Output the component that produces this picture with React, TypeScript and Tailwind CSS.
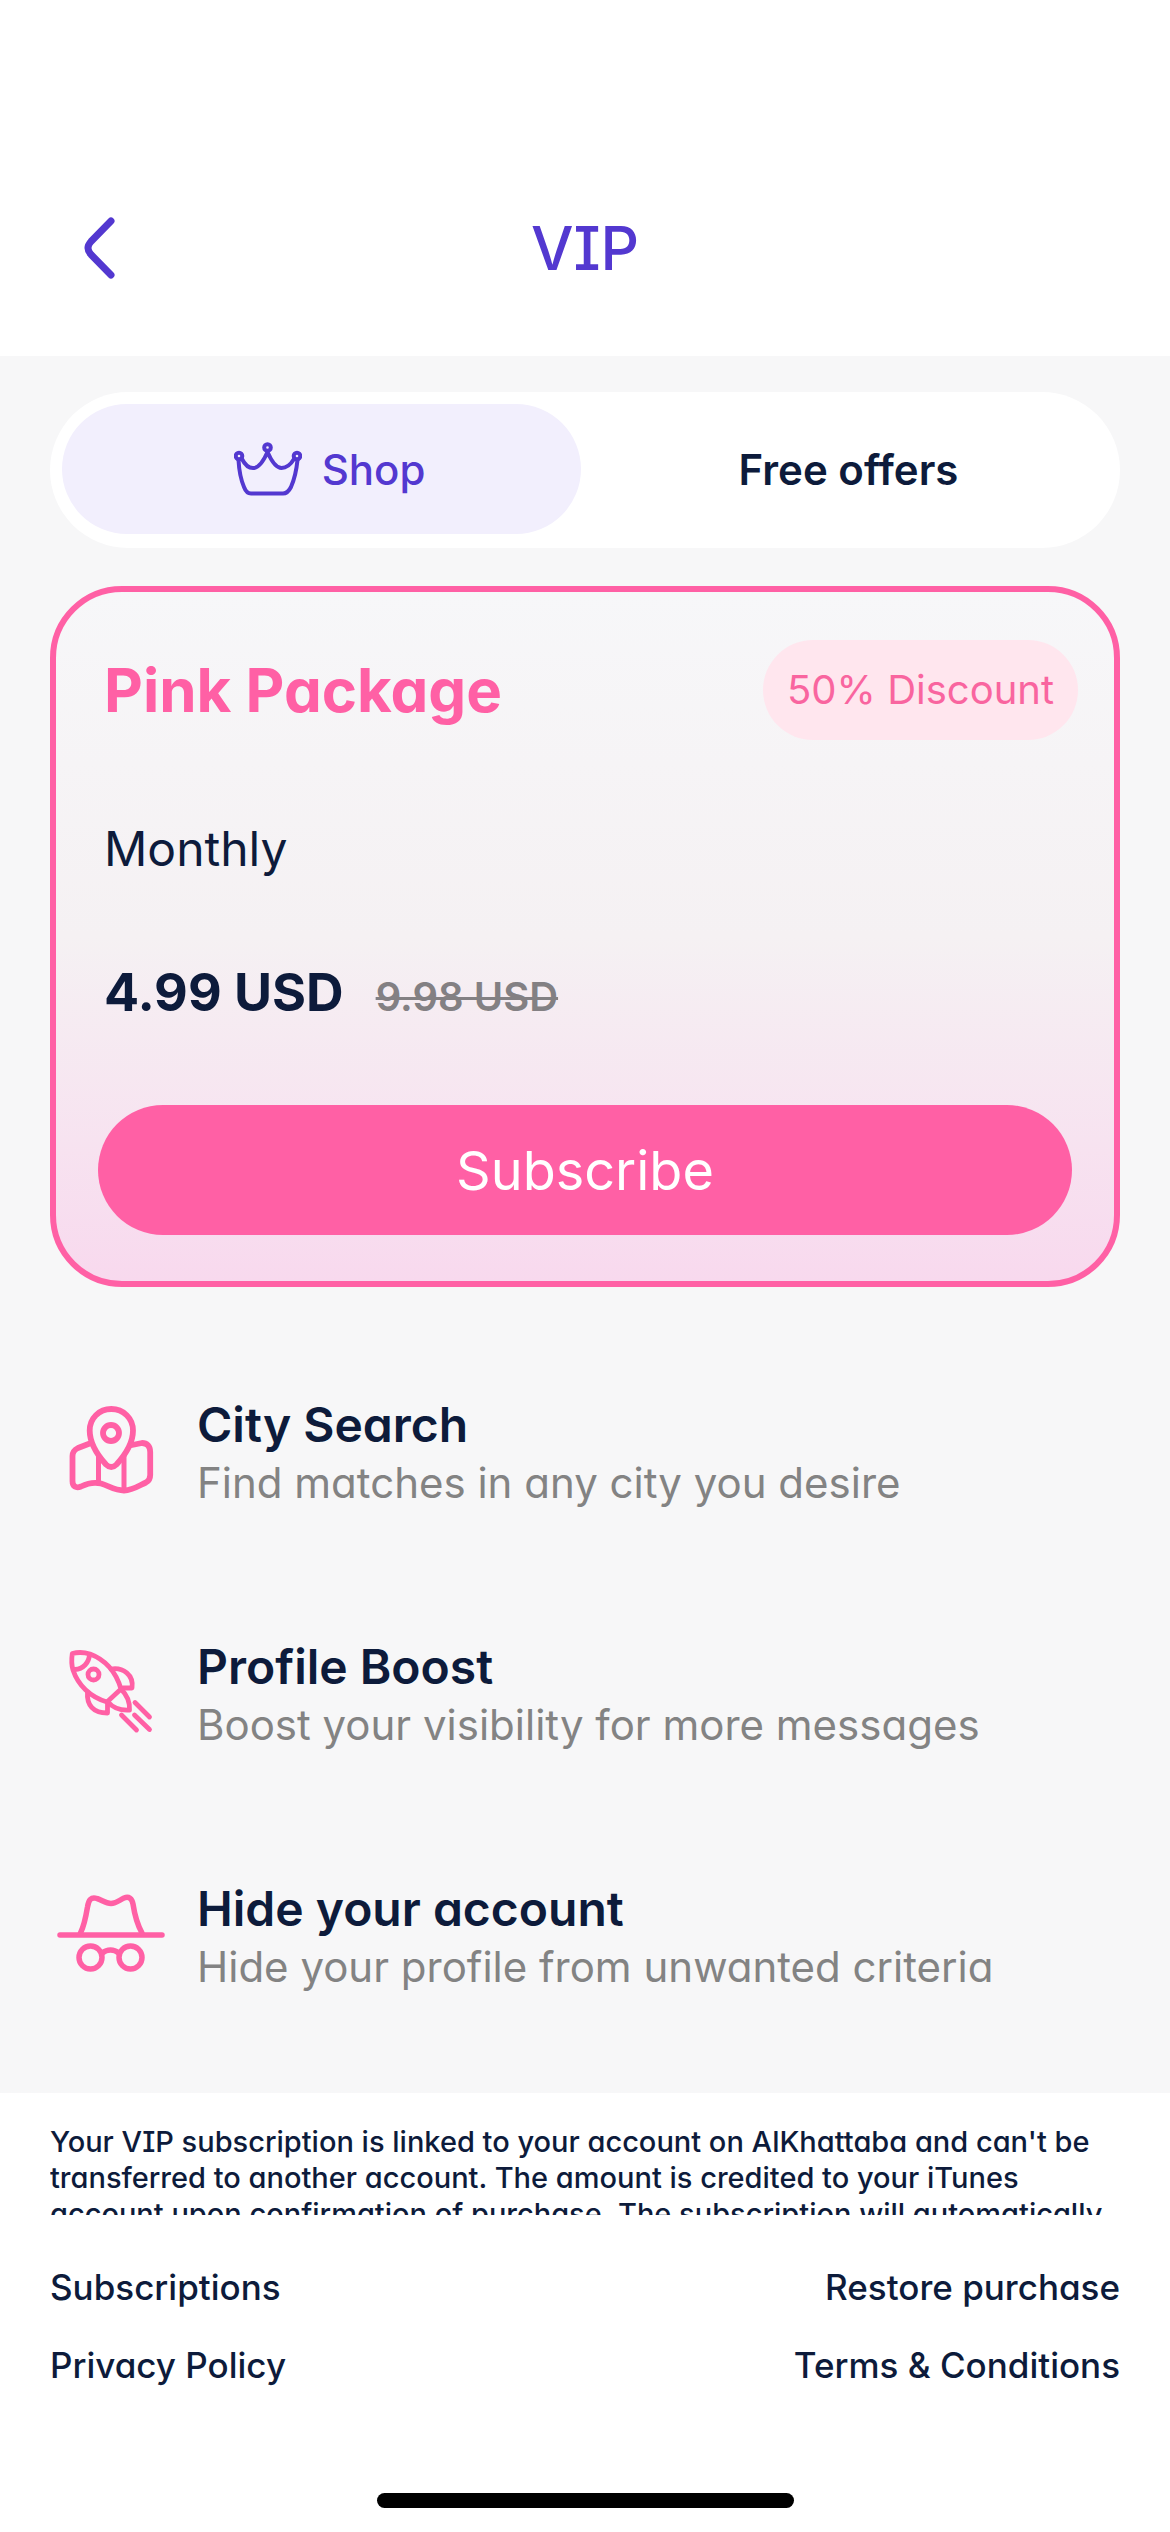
import { useState } from "react";
import type { ReactNode } from "react";

function CrownIcon() {
  return (
    <svg viewBox="0 0 68 54" className="w-[68px] h-[54px]" fill="none" stroke="currentColor" strokeWidth="4" strokeLinecap="round" strokeLinejoin="round">
      <circle cx="5" cy="14" r="3.3" />
      <circle cx="33.5" cy="5.5" r="3.3" />
      <circle cx="63" cy="14" r="3.3" />
      <path d="M4.5 18C5 27 7 38 10 45C11.5 49 13.5 51.5 17 51.5H49C53 51.5 55 49 57 45C60.5 37 62.5 28 63.5 18" />
      <path d="M8 17C11 23 15 26 19 26C25 26 30 18 33.5 10C37 18 42 26 47.5 26C52 26 57 22 60 17" />
    </svg>
  );
}

function MapIcon() {
  return (
    <svg viewBox="0 0 108 108" className="size-[108px]" fill="none" stroke="currentColor" strokeWidth="5.8" strokeLinecap="round" strokeLinejoin="round">
      <path d="M54.3 10C42 10 32.7 19.5 32.7 31.5C32.7 42 39.5 55 49 65.5C52.5 69 56 69 59.5 65.5C69 55 76 42 76 31.5C76 19.5 66.5 10 54.3 10Z" />
      <circle cx="54" cy="34" r="8" />
      <path d="M34 44L21 49C17 51 15.5 53 15.5 57V82C15.5 87.5 19 89.5 24 87.5C31 84 38 83 44 84.5C52 87 58 91.5 67 91.5C76 91.5 83 86 89 83.5C92 82 93.2 79.5 93.2 76V53C93.2 47 90 44 85 44L75 46" />
      <path d="M41.5 57V84M67 57V91" strokeWidth="5" />
    </svg>
  );
}

function RocketIcon() {
  return (
    <svg viewBox="0 0 108 108" className="size-[108px]" fill="none" stroke="currentColor" strokeWidth="4.8" strokeLinecap="round" strokeLinejoin="round">
      <path d="M15.3 12.5C21 11 28 11.5 33 13C49 19 59 31 64 48L50 61C33 56 21 44 16 29C14.5 24 14.5 18 15.3 12.5Z" />
      <path d="M32.5 13.5C32 22 26 28 18 28.5" />
      <circle cx="36.5" cy="33.5" r="5.5" />
      <path d="M54 28C66 26 77 34 75 47H66" />
      <path d="M30.5 51C29.5 64 36 72 50.5 72V62" />
      <path d="M51 61C56 67 64 69.5 72.5 69C73 60 70 54 64 48" />
      <path d="M78 61.5L92.5 76M77.5 74L92.5 88.5M64.5 74L79.5 89" />
    </svg>
  );
}

function IncognitoIcon() {
  return (
    <svg viewBox="0 0 108 108" className="size-[108px]" fill="none" stroke="currentColor" strokeWidth="5.5" strokeLinecap="round" strokeLinejoin="round">
      <path d="M3 52H105" />
      <path d="M23.5 50C27.5 42 29 33 30.5 24C31.5 17 34 13.5 40 15.5C45 17 48.5 20.5 54 20.5C59.5 20.5 62.5 17 67 15C72 13 75 15.5 76 21C77.5 31 80 41 85 50" />
      <circle cx="33.5" cy="74.5" r="11.5" />
      <circle cx="73.5" cy="74.5" r="11.5" />
      <path d="M45.5 70C50 66 57 66 61.5 70" />
    </svg>
  );
}

interface FeatureProps {
  icon: ReactNode;
  title: string;
  text: string;
}

function Feature({ icon, title, text }: FeatureProps) {
  return (
    <li className="flex items-center gap-8">
      <span className="text-[#ff60a5]">{icon}</span>
      <div>
        <h3 className="text-[48px] leading-[60px] font-semibold">{title}</h3>
        <p className="text-[42px] leading-[56px] text-[#838383]">{text}</p>
      </div>
    </li>
  );
}

const features = [
  { icon: <MapIcon />, title: "City Search", text: "Find matches in any city you desire" },
  { icon: <RocketIcon />, title: "Profile Boost", text: "Boost your visibility for more messages" },
  { icon: <IncognitoIcon />, title: "Hide your account", text: "Hide your profile from unwanted criteria" },
];

export default function App() {
  const [tab, setTab] = useState("shop");

  return (
    <div className="min-h-screen flex flex-col bg-white text-[#0d1b3b] font-['Inter',sans-serif] [font-optical-sizing:none] [font-feature-settings:'cv11','cv08']">
      <header className="grid grid-cols-[1fr_auto_1fr] items-center px-[82px] pt-[208px] pb-[68px] text-[#5338d0]">
        <button aria-label="Back" className="justify-self-start cursor-pointer">
          <svg viewBox="0 0 34 64" className="w-[34px] h-[64px]" fill="none" stroke="currentColor" strokeWidth="7" strokeLinecap="round">
            <path d="M29 5L9 25.5C5 30 5 34 9 38.5L29 59" />
          </svg>
        </button>
        <h1 className="text-[60px] leading-[80px] font-medium">VIP</h1>
      </header>

      <main className="bg-[#f7f7f8] px-[50px] pt-9 pb-[98px]">
        <div className="grid grid-cols-2 gap-2 rounded-full bg-white px-3 pt-3 pb-3.5 text-[42px]">
          <button
            onClick={() => setTab("shop")}
            className={`flex items-center justify-center gap-5 h-[130px] pl-4 rounded-full font-medium cursor-pointer ${tab === "shop" ? "bg-[#f2effd] text-[#5338d0]" : ""}`}
          >
            <CrownIcon />
            Shop
          </button>
          <button
            onClick={() => setTab("offers")}
            className={`flex items-center justify-center h-[130px] rounded-full font-semibold cursor-pointer ${tab === "offers" ? "bg-[#f2effd] text-[#5338d0]" : ""}`}
          >
            Free offers
          </button>
        </div>

        <section className="mt-[38px] rounded-[72px] border-6 border-[#ff60a5] bg-linear-to-b from-[#f7f7f9] via-[#f5f1f3] via-50% to-[#f8d9ee] px-[42px] pt-12 pb-[46px]">
          <div className="flex items-center justify-between pl-1.5">
            <h2 className="text-[60px] leading-[72px] font-bold text-[#ff60a5]">Pink Package</h2>
            <span className="-mr-1.5 rounded-full bg-[#ffe6ee] px-6 text-[40px] leading-[100px] text-[#f9659f]">50% Discount</span>
          </div>
          <p className="mt-[77px] pl-1.5 text-[48px] leading-[64px]">Monthly</p>
          <div className="mt-[76px] flex items-baseline gap-8 pl-1.5">
            <span className="text-[52px] leading-[72px] font-bold">4.99 USD</span>
            <s className="text-[40px] leading-[52px] font-semibold text-[#838083] decoration-3">9.98 USD</s>
          </div>
          <button className="mt-[76px] w-full h-[130px] rounded-full bg-[#ff60a5] text-[54px] text-white cursor-pointer">
            Subscribe
          </button>
        </section>

        <ul className="mt-[108px] flex flex-col gap-[126px] pl-[7px]">
          {features.map((feature) => (
            <Feature key={feature.title} {...feature} />
          ))}
        </ul>
      </main>

      <footer className="flex flex-1 flex-col px-[50px] pt-[31px] pb-6">
        <p className="h-[91px] overflow-hidden text-[29px] leading-[36px] font-medium">
          Your VIP subscription is linked to your account on AlKhattaba and can't be transferred to another account. The amount is credited to your iTunes account upon confirmation of purchase. The subscription will automatically renew.
        </p>
        <nav className="mt-[48px] grid grid-cols-2 gap-y-[30px] text-[35px] leading-[48px] font-medium">
          <a href="#subscriptions">Subscriptions</a>
          <a href="#restore" className="text-right">Restore purchase</a>
          <a href="#privacy">Privacy Policy</a>
          <a href="#terms" className="text-right">Terms &amp; Conditions</a>
        </nav>
        <div className="mx-auto mt-auto h-[15px] w-[417px] rounded-full bg-black" />
      </footer>
    </div>
  );
}
